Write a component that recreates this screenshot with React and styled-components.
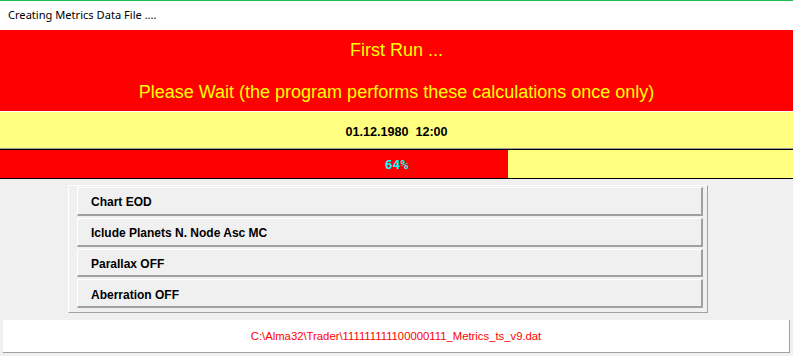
import React from "react";
import styled, { createGlobalStyle } from "styled-components";

const Global = createGlobalStyle`
  body {
    margin: 0;
    background: #f0f0f0;
    font-family: "Liberation Sans", Arial, sans-serif;
  }
`;

const Window = styled.div`
  width: 793px;
  height: 356px;
  background: #f0f0f0;
  overflow: hidden;
`;

const TitleBar = styled.div`
  height: 30px;
  box-sizing: border-box;
  border-top: 1px solid #1fbf4f;
  background: #fff;
  padding: 0 0 2px 8px;
  display: flex;
  align-items: center;
  font-family: "Noto Sans", "Liberation Sans", sans-serif;
  font-size: 11.1px;
  color: #000;
`;

const Banner = styled.div`
  height: 82px;
  box-sizing: border-box;
  background: #ff0000;
  border-bottom: 1px solid #fff;
  color: #ffff00;
  font-size: 18px;
  display: flex;
  flex-direction: column;
  align-items: center;
  justify-content: space-between;
  padding: 10px 0 8px;
`;

const DateBar = styled.div`
  height: 37px;
  box-sizing: border-box;
  padding-top: 3px;
  background: #ffff80;
  border-bottom: 1px solid #a0a0a0;
  display: flex;
  align-items: center;
  justify-content: center;
  font-size: 12.6px;
  font-weight: bold;
  white-space: pre;
`;

const Progress = styled.div`
  position: relative;
  height: 28px;
  background: #ffff80;
  border-top: 1px solid #000;
  border-bottom: 1px solid #000;
`;

const Fill = styled.div`
  height: 100%;
  background: #ff0000;
`;

const Percent = styled.div`
  position: absolute;
  inset: 0;
  display: flex;
  align-items: center;
  justify-content: center;
  font-family: "DejaVu Sans Mono", monospace;
  font-weight: bold;
  font-size: 13px;
  color: #00ffff;
`;

const Panel = styled.div`
  margin: 6px 0 0 68px;
  width: 640px;
  height: 128px;
  box-sizing: border-box;
  border-top: 1px solid #fff;
  border-left: 1px solid #fff;
  border-right: 1px solid #a0a0a0;
  border-bottom: 1px solid #a0a0a0;
  padding: 1px 4px 4px 8px;
  display: flex;
  flex-direction: column;
  gap: 2px;
`;

const Button = styled.div`
  height: 29px;
  box-sizing: border-box;
  border-top: 1px solid #fff;
  border-left: 1px solid #fff;
  border-right: 2px solid #a0a0a0;
  border-bottom: 2px solid #a0a0a0;
  padding: 3px 0 0 13px;
  display: flex;
  align-items: center;
  font-size: 12px;
  font-weight: bold;
  color: #000;
`;

const Footer = styled.div`
  margin: 7px 0 0 3px;
  width: 787px;
  height: 33px;
  box-sizing: border-box;
  background: #fff;
  border-right: 1px solid #a0a0a0;
  border-bottom: 1px solid #a0a0a0;
  display: flex;
  align-items: center;
  justify-content: center;
  font-size: 11.3px;
  color: #ff0000;
`;

const options = [
  "Chart EOD",
  "Iclude Planets N. Node Asc MC",
  "Parallax OFF",
  "Aberration OFF",
];

const App = () => {
  const completed = 64;
  return (
    <Window>
      <Global />
      <TitleBar>Creating Metrics Data File ....</TitleBar>
      <Banner>
        <div>First Run ...</div>
        <div>Please Wait (the program performs these calculations once only)</div>
      </Banner>
      <DateBar>{"01.12.1980  12:00"}</DateBar>
      <Progress>
        <Fill style={{ width: `${completed}%` }} />
        <Percent>{completed}%</Percent>
      </Progress>
      <Panel>
        {options.map((o) => (
          <Button key={o}>{o}</Button>
        ))}
      </Panel>
      <Footer>C:\Alma32\Trader\111111111100000111_Metrics_ts_v9.dat</Footer>
    </Window>
  );
};

export default App;
